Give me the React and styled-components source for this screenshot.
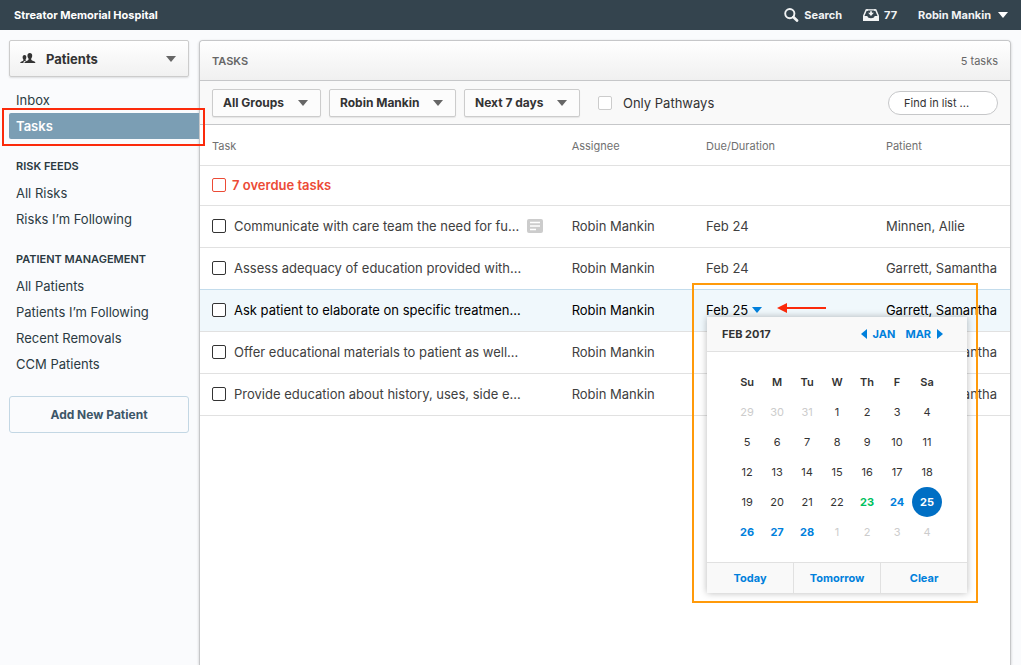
import { useState } from 'react'
import styled, { createGlobalStyle, css } from 'styled-components'

const GlobalStyle = createGlobalStyle`
  * {
    box-sizing: border-box;
  }

  body {
    margin: 0;
    background: #fafbfd;
    color: #333;
    font-family: Inter, 'Liberation Sans', sans-serif;
    font-size: 13px;
    line-height: 18px;
  }

  button, input, select {
    font-family: inherit;
    color: inherit;
    margin: 0;
  }
`;

const Page = styled.div`
  display: flex;
  flex-direction: column;
  min-height: 100vh;
`;

const TopBar = styled.header`
  display: flex;
  align-items: center;
  justify-content: space-between;
  height: 30px;
  padding: 0 13px 0 14px;
  background: #34444e;
  color: #fff;
  font-size: 11px;
  font-weight: 700;
`;

const TopActions = styled.div`
  display: flex;
  align-items: center;
  gap: 21px;
`;

const TopButton = styled.button`
  display: flex;
  align-items: center;
  gap: ${({ $gap }) => $gap || 5}px;
  padding: 0;
  border: none;
  background: none;
  color: #f1f3f4;
  font-size: 11px;
  font-weight: 700;
  cursor: pointer;
`;

const Caret = styled.span`
  width: 0;
  height: 0;
  border-left: 5px solid transparent;
  border-right: 5px solid transparent;
  border-top: 6px solid ${({ $color }) => $color || '#fff'};
`;

const Body = styled.div`
  display: flex;
  flex: 1;
  padding: 10px 10px 0 9px;
`;

const Sidebar = styled.nav`
  flex: 0 0 190px;
  color: #2b3a42;
`;

const SelectWrap = styled.div`
  position: relative;
  display: flex;
  align-items: center;

  & > svg {
    position: absolute;
    left: 11px;
    pointer-events: none;
  }

  & > ${Caret} {
    position: absolute;
    right: 13px;
    pointer-events: none;
  }
`;

const Select = styled.select`
  appearance: none;
  height: 28px;
  padding: 0 35px 0 10px;
  border: 1px solid #ccc;
  border-radius: 2px;
  background: #fcfcfc;
  box-shadow: 0 1px 1px rgba(0, 0, 0, 0.08);
  color: #333;
  font-size: 12px;
  font-weight: 700;
`;

const SectionWrap = styled(SelectWrap)`
  width: 180px;
  margin-bottom: 10px;
`;

const SectionSelect = styled(Select)`
  width: 100%;
  height: 37px;
  padding-left: 36px;
  background: linear-gradient(#fff, #f1f1f1);
  box-shadow: 0 1px 2px rgba(0, 0, 0, 0.12);
  font-size: 13px;
`;

const NavHeading = styled.h2`
  margin: 18px 0 5px;
  padding-left: 7px;
  font-size: 11px;
  font-weight: 600;
  line-height: 18px;
`;

const NavList = styled.ul`
  margin: 0;
  padding: 0;
  list-style: none;
`;

const NavItem = styled.li`
  position: relative;
`;

const NavLink = styled.a`
  display: block;
  padding-left: 7px;
  color: inherit;
  line-height: 26px;
  text-decoration: none;

  ${({ $active }) => $active && css`
    border-radius: 2px 0 0 2px;
    background: #7b9eb4;
    color: #fff;
    font-weight: 600;
  `}
`;

const RedFrame = styled.div`
  position: absolute;
  inset: -5px -6px -7px -7px;
  z-index: 2;
  border: 2px solid #fb2a0b;
  pointer-events: none;
`;

const AddButton = styled.button`
  width: 180px;
  height: 37px;
  margin-top: 19px;
  border: 1px solid #c3d7e4;
  border-radius: 3px;
  background: #fafbfd;
  color: #3d5668;
  font-size: 12px;
  font-weight: 700;
  cursor: pointer;
`;

const Panel = styled.main`
  flex: 1;
  min-width: 0;
  border: 1px solid #c6c7c9;
  border-bottom: none;
  border-radius: 4px 4px 0 0;
  background: #fff;
  box-shadow: 0 1px 3px rgba(0, 0, 0, 0.2);
`;

const PanelHeader = styled.div`
  display: flex;
  align-items: center;
  justify-content: space-between;
  height: 40px;
  padding: 0 12px;
  border-bottom: 1px solid #c6c7c9;
  border-radius: 4px 4px 0 0;
  background: linear-gradient(#fff, #f0f0f0);
  color: #666;
  font-size: 11px;
`;

const PanelTitle = styled.h1`
  margin: 0;
  font-size: 11px;
  font-weight: 600;
`;

const Toolbar = styled.div`
  display: flex;
  align-items: center;
  gap: 8px;
  height: 44px;
  padding: 0 12px;
  border-bottom: 1px solid #c6c7c9;
  background: #f9f9f9;
`;

const CheckLabel = styled.label`
  display: flex;
  align-items: center;
  gap: 11px;
  margin-left: 10px;
`;

const Checkbox = styled.input`
  appearance: none;
  flex: none;
  width: 14px;
  height: 14px;
  border: 1px solid ${({ $color }) => $color || '#333'};
  border-radius: 2px;
  background: #fff;

  &:checked {
    background: ${({ $color }) => $color || '#333'};
    box-shadow: inset 0 0 0 2px #fff;
  }
`;

const FindInput = styled.input`
  width: 110px;
  height: 24px;
  margin-left: auto;
  padding: 0 15px;
  border: 1px solid #c6c7c9;
  border-radius: 12px;
  background: #fff;
  font-size: 11px;

  &::placeholder {
    color: #333;
    opacity: 1;
  }
`;

const TaskTable = styled.table`
  width: 100%;
  border-collapse: collapse;
  table-layout: fixed;
`;

const Th = styled.th`
  width: ${({ $width }) => $width};
  height: 40px;
  padding: 3px 0 0 12px;
  color: #707070;
  font-size: 11px;
  font-weight: 400;
  text-align: left;
`;

const Row = styled.tr`
  height: ${({ $short }) => ($short ? 40 : 42)}px;
  border-top: 1px solid #e1e1e1;
  color: #404040;

  &:last-child {
    border-bottom: 1px solid #e1e1e1;
  }

  ${({ $selected }) => $selected && css`
    border-top-color: #c3dcec;
    background: #f0f8fc;
    color: #000;
  `}
`;

const Td = styled.td`
  padding: 0 0 0 12px;
  white-space: nowrap;
`;

const TaskLabel = styled.label`
  display: flex;
  align-items: center;
  gap: 8px;
`;

const OverdueLabel = styled(TaskLabel)`
  gap: 6px;
  color: #ec4b36;
  font-weight: 600;
`;

const DueAnchor = styled.div`
  position: relative;
`;

const DueButton = styled.button`
  display: flex;
  align-items: center;
  gap: 4px;
  padding: 0;
  border: none;
  background: none;
  font-size: 13px;
  line-height: 18px;
`;

const OrangeFrame = styled.div`
  position: absolute;
  top: -18px;
  left: -14px;
  z-index: 4;
  width: 286px;
  height: 320px;
  border: 2px solid #ff9a0a;
  pointer-events: none;
`;

const Arrow = styled.svg`
  position: absolute;
  top: 1px;
  left: 71px;
`;

const Popover = styled.div`
  position: absolute;
  top: 16px;
  left: 1px;
  z-index: 3;
  width: 260px;
  background: #fff;
  box-shadow: 0 0 7px rgba(0, 0, 0, 0.28);
  color: #333;
  font-size: 11px;
`;

const PopoverHeader = styled.div`
  display: flex;
  align-items: center;
  gap: 10px;
  height: 35px;
  padding: 0 24px 0 15px;
  border-bottom: 1px solid #e1e1e1;
  background: #f9f9f9;
`;

const MonthTitle = styled.strong`
  flex: 1;
  font-weight: 700;
`;

const MonthButton = styled.button`
  display: flex;
  align-items: center;
  gap: 6px;
  padding: 0;
  border: none;
  background: none;
  color: #0080dc;
  font-size: 11px;
  font-weight: 700;
  cursor: pointer;
`;

const MonthArrow = styled.span`
  border-top: 5px solid transparent;
  border-bottom: 5px solid transparent;
  ${({ $side }) => ($side === 'left' ? 'border-right' : 'border-left')}: 6px solid #0080dc;
`;

const Calendar = styled.table`
  margin: 15px auto;
  border-collapse: collapse;
  text-align: center;

  th, td {
    width: 30px;
    height: 30px;
    padding: 0;
  }

  th {
    font-weight: 600;
  }
`;

const dayTones = {
  normal: css`color: #333;`,
  muted: css`color: #ccc;`,
  today: css`color: #00bf60; font-weight: 700;`,
  open: css`color: #0080dc; font-weight: 700;`,
  picked: css`background: #006fc4; color: #fff; font-weight: 700;`,
};

const Day = styled.button`
  display: block;
  width: 30px;
  height: 30px;
  padding: 0;
  border: none;
  border-radius: 50%;
  background: none;
  font-size: 11px;
  cursor: pointer;
  ${({ $tone }) => dayTones[$tone]}
`;

const PopoverFooter = styled.div`
  display: flex;
  height: 31px;
  border-top: 1px solid #e1e1e1;
  background: #f9f9f9;
`;

const FooterButton = styled.button`
  flex: 1;
  padding: 0;
  border: none;
  background: none;
  color: #0080dc;
  font-size: 11px;
  font-weight: 700;
  cursor: pointer;

  & + & {
    border-left: 1px solid #e1e1e1;
  }
`;

const TASKS = [
  { id: 1, text: 'Communicate with care team the need for fu...', due: 'Feb 24', patient: 'Minnen, Allie', note: true },
  { id: 2, text: 'Assess adequacy of education provided with...', due: 'Feb 24', patient: 'Garrett, Samantha' },
  { id: 3, text: 'Ask patient to elaborate on specific treatmen...', due: 'Feb 25', patient: 'Garrett, Samantha', selected: true },
  { id: 4, text: 'Offer educational materials to patient as well...', patient: 'Garrett, Samantha' },
  { id: 5, text: 'Provide education about history, uses, side e...', patient: 'Garrett, Samantha' },
];

const WEEKDAYS = ['Su', 'M', 'Tu', 'W', 'Th', 'F', 'Sa'];

const WEEKS = [
  [29, 30, 31, 1, 2, 3, 4],
  [5, 6, 7, 8, 9, 10, 11],
  [12, 13, 14, 15, 16, 17, 18],
  [19, 20, 21, 22, 23, 24, 25],
  [26, 27, 28, 1, 2, 3, 4],
];

function getTone(week, day, picked) {
  if ((week === 0 && day > 7) || (week === 4 && day < 7)) return 'muted';
  if (day === picked) return 'picked';
  if (day === 23) return 'today';
  if (day > 23) return 'open';
  return 'normal';
}

function SearchIcon() {
  return (
    <svg width="15" height="14" viewBox="0 0 15 14" fill="none" stroke="#f1f3f4" aria-hidden="true">
      <circle cx="5.8" cy="5.6" r="4.6" strokeWidth="1.9" />
      <path d="M9.3 9.1 13 12.6" strokeWidth="2.7" strokeLinecap="round" />
    </svg>
  )
}

function TrayIcon() {
  return (
    <svg width="16" height="12" viewBox="0 0 16 12" aria-hidden="true">
      <path d="M5 1H3.2L.8 6.6V11h14.4V6.6L12.8 1H11" fill="none" stroke="#f1f3f4" strokeWidth="1.5" />
      <path d="M0 7h4.300c.4 1.500 1.700 2.200 3.700 2.200s3.300-.7 3.700-2.200H16V12H0z" fill="#f1f3f4" />
      <path d="M7.100 2.300h1.800v1.400h2L8 7 5.100 3.700h2z" fill="#f1f3f4" />
      <path d="M3.200.2h9.600v1.300H3.200z" fill="#f1f3f4" />
    </svg>
  )
}

function PeopleIcon() {
  return (
    <svg width="16" height="11" viewBox="0 0 17 12" fill="#333" aria-hidden="true">
      <path d="M10.500 0c1.700 0 2.600 1.200 2.600 3 0 1.300-.5 2.400-1.100 3v1.200c0 .5.4.7 1 1l2.500 1c.7.300 1 .8 1 1.800H4.700c0-1 .3-1.500 1-1.800l2.400-1c.6-.3 1-.5 1-1V6C8.400 5.400 7.900 4.300 7.900 3c0-1.800.9-3 2.600-3z" />
      <path d="M4.600 2.200c1.300 0 2.100.9 2.100 2.300 0 1-.3 1.700-.8 2.200v.7c0 .3.200.5.6.7l-1.700.7c-.9.400-1.200 1.100-1.300 2.200H0c0-.9.300-1.300.9-1.500l1.800-.8c.5-.2.700-.4.700-.8v-1c-.5-.5-.8-1.200-.8-2.200 0-1.400.7-2.500 2-2.500z" />
    </svg>
  )
}

function NoteIcon() {
  return (
    <svg width="16" height="14" viewBox="0 0 16 14" aria-hidden="true">
      <rect width="16" height="14" rx="2" fill="#ccc" />
      <path d="M3 3.500h10M3 7h10M3 10.500h6" stroke="#fff" strokeWidth="1.400" />
    </svg>
  )
}

function Dropdown({ label, value, color = '#666' }) {
  return (
    <SelectWrap>
      <Select aria-label={label} defaultValue={value}>
        <option>{value}</option>
      </Select>
      <Caret $color={color} />
    </SelectWrap>
  )
}

function NavGroup({ items, active }) {
  return (
    <NavList>
      {items.map(item => (
        <NavItem key={item}>
          <NavLink href="#" $active={item === active}>{item}</NavLink>
          {item === active && <RedFrame />}
        </NavItem>
      ))}
    </NavList>
  )
}

function DatePicker({ picked, onPick }) {
  return (
    <Popover>
      <PopoverHeader>
        <MonthTitle>FEB 2017</MonthTitle>
        <MonthButton><MonthArrow $side="left" />JAN</MonthButton>
        <MonthButton>MAR<MonthArrow $side="right" /></MonthButton>
      </PopoverHeader>
      <Calendar>
        <thead>
          <tr>{WEEKDAYS.map(d => <th key={d}>{d}</th>)}</tr>
        </thead>
        <tbody>
          {WEEKS.map((week, i) => (
            <tr key={i}>
              {week.map(day => (
                <td key={day}>
                  <Day $tone={getTone(i, day, picked)} onClick={() => onPick(day)}>{day}</Day>
                </td>
              ))}
            </tr>
          ))}
        </tbody>
      </Calendar>
      <PopoverFooter>
        <FooterButton onClick={() => onPick(23)}>Today</FooterButton>
        <FooterButton onClick={() => onPick(24)}>Tomorrow</FooterButton>
        <FooterButton onClick={() => onPick(null)}>Clear</FooterButton>
      </PopoverFooter>
    </Popover>
  )
}

function DueCell({ due }) {
  const [picked, setPicked] = useState(25);

  return (
    <DueAnchor>
      <DueButton>{due}<Caret $color="#0080dc" /></DueButton>
      <Arrow width="50" height="12" viewBox="0 0 50 12" aria-hidden="true">
        <path d="M9 6h40" stroke="#fb2a0b" strokeWidth="2" />
        <path d="M0 6l10-5v10z" fill="#fb2a0b" />
      </Arrow>
      <DatePicker picked={picked} onPick={setPicked} />
      <OrangeFrame />
    </DueAnchor>
  )
}

function App() {
  return (
    <Page>
      <GlobalStyle />
      <TopBar>
        <span>Streator Memorial Hospital</span>
        <TopActions>
          <TopButton><SearchIcon />Search</TopButton>
          <TopButton><TrayIcon />77</TopButton>
          <TopButton $gap={7}>Robin Mankin<Caret /></TopButton>
        </TopActions>
      </TopBar>
      <Body>
        <Sidebar>
          <SectionWrap>
            <SectionSelect aria-label="Section" defaultValue="Patients">
              <option>Patients</option>
            </SectionSelect>
            <PeopleIcon />
            <Caret $color="#666" />
          </SectionWrap>
          <NavGroup items={['Inbox', 'Tasks']} active="Tasks" />
          <NavHeading>RISK FEEDS</NavHeading>
          <NavGroup items={['All Risks', 'Risks I’m Following']} />
          <NavHeading>PATIENT MANAGEMENT</NavHeading>
          <NavGroup items={['All Patients', 'Patients I’m Following', 'Recent Removals', 'CCM Patients']} />
          <AddButton>Add New Patient</AddButton>
        </Sidebar>
        <Panel>
          <PanelHeader>
            <PanelTitle>TASKS</PanelTitle>
            <span>5 tasks</span>
          </PanelHeader>
          <Toolbar>
            <Dropdown label="Group" value="All Groups" />
            <Dropdown label="Assignee" value="Robin Mankin" />
            <Dropdown label="Due" value="Next 7 days" />
            <CheckLabel>
              <Checkbox type="checkbox" $color="#ccc" />
              Only Pathways
            </CheckLabel>
            <FindInput type="text" aria-label="Find in list" placeholder="Find in list ..." />
          </Toolbar>
          <TaskTable>
            <thead>
              <tr>
                <Th $width="44.4%">Task</Th>
                <Th $width="16.6%">Assignee</Th>
                <Th $width="22.2%">Due/Duration</Th>
                <Th $width="16.8%">Patient</Th>
              </tr>
            </thead>
            <tbody>
              <Row $short>
                <Td colSpan={4}>
                  <OverdueLabel>
                    <Checkbox type="checkbox" $color="#ec4b36" />
                    7 overdue tasks
                  </OverdueLabel>
                </Td>
              </Row>
              {TASKS.map(task => (
                <Row key={task.id} $selected={task.selected}>
                  <Td>
                    <TaskLabel>
                      <Checkbox type="checkbox" />
                      {task.text}
                      {task.note && <NoteIcon />}
                    </TaskLabel>
                  </Td>
                  <Td>Robin Mankin</Td>
                  <Td>{task.selected ? <DueCell due={task.due} /> : task.due}</Td>
                  <Td>{task.patient}</Td>
                </Row>
              ))}
            </tbody>
          </TaskTable>
        </Panel>
      </Body>
    </Page>
  )
}

export default App
